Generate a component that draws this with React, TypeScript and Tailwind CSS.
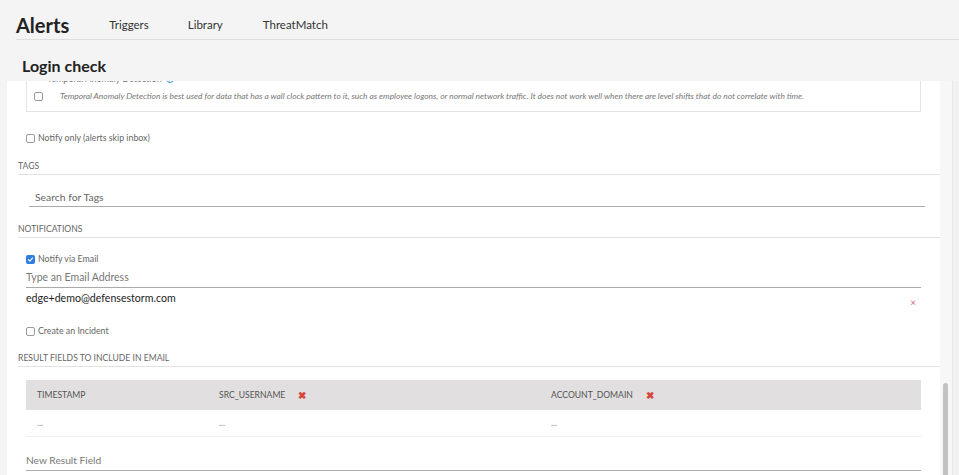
import React from 'react';

const font = { fontFamily: 'Lato, "Open Sans", Arial, sans-serif' };

function Box({ checked }: { checked?: boolean }) {
  if (checked) {
    return (
      <span className="inline-flex h-[9px] w-[9px] shrink-0 items-center justify-center rounded-[2px] bg-[#2f7de1]">
        <svg viewBox="0 0 10 10" className="h-[7px] w-[7px]">
          <path d="M2 5.2 L4.2 7.3 L8 2.8" fill="none" stroke="white" strokeWidth="1.6" strokeLinecap="round" strokeLinejoin="round" />
        </svg>
      </span>
    );
  }
  return <span className="inline-block h-[9px] w-[9px] shrink-0 rounded-[2px] border border-[#9a9a9a] bg-white" />;
}

function CheckRow({ label, checked, className }: { label: string; checked?: boolean; className: string }) {
  return (
    <div className={`ml-[19px] flex h-[14px] items-center gap-[3px] text-[8.8px] text-[#666] ${className}`}>
      <Box checked={checked} />
      <span>{label}</span>
    </div>
  );
}

function SectionHead({ title, className }: { title: string; className: string }) {
  return (
    <div className={`ml-[11px] flex h-[17px] items-center border-b border-[#e2e2e2] text-[8.6px] uppercase text-[#666] ${className}`}>
      {title}
    </div>
  );
}

function RedX() {
  return <span className="ml-[13px] text-[10px] font-bold leading-none text-[#d9453d]">✖</span>;
}

export default function App() {
  return (
    <div className="flex h-[475px] w-[959px] flex-col overflow-hidden bg-[#f4f4f4]" style={font}>
      <header className="ml-[16px] flex h-[40px] items-center border-b border-[#dedede] pt-[11px]">
        <h1 className="text-[20px] font-bold leading-none text-[#222]">Alerts</h1>
        <nav className="ml-[40px] flex text-[11.5px] text-[#333]">
          <span>Triggers</span>
          <span className="ml-[39px]">Library</span>
          <span className="ml-[40px]">ThreatMatch</span>
        </nav>
      </header>
      <div className="flex h-[41px] items-center pl-[22px] pt-[11px]">
        <h2 className="text-[16px] font-bold leading-none text-[#222]">Login check</h2>
      </div>

      <div className="flex flex-1 overflow-hidden">
        <div className="ml-[7px] w-[933px] overflow-hidden bg-white">
          <div className="-mt-[16px]">
            {/* anomaly detection option, scrolled mostly out of view */}
            <div className="ml-[19px] w-[895px] border border-[#e3e3e3] px-[7px] pb-[8px] pt-[7px]">
              <div className="ml-[13px] flex h-[12px] items-center gap-[4px] text-[9px] text-[#777]">
                <span>Temporal Anomaly Detection</span>
                <span className="inline-flex h-[8px] w-[8px] items-center justify-center rounded-full border border-[#3b97d3] text-[6px] font-bold text-[#3b97d3]">?</span>
              </div>
              <div className="mt-[4px] flex h-[14px] items-center">
                <Box />
                <span className="ml-[17px] whitespace-nowrap text-[8.4px] italic text-[#777]">
                  Temporal Anomaly Detection is best used for data that has a wall clock pattern to it, such as employee logons, or normal network traffic. It does not work well when there are level shifts that do not correlate with time.
                </span>
              </div>
            </div>

            <CheckRow label="Notify only (alerts skip inbox)" className="mt-[19px]" />

            <SectionHead title="Tags" className="mt-[13px]" />

            <div className="ml-[22px] mt-[14px] flex h-[18px] w-[896px] items-center border-b border-[#aaa] pl-[6px] text-[10.4px] text-[#666]">
              Search for Tags
            </div>

            <SectionHead title="Notifications" className="mt-[14px]" />

            <CheckRow label="Notify via Email" checked className="mt-[14px]" />

            <div className="ml-[19px] mt-[3px] flex h-[19px] w-[895px] items-center border-b border-[#aaa] text-[10.5px] text-[#777]">
              Type an Email Address
            </div>

            <div className="ml-[19px] mt-[4px] flex h-[14px] w-[895px] items-center justify-between pr-[5px]">
              <span className="text-[10.6px] text-[#222]">edge+demo@defensestorm.com</span>
              <span className="mt-[6px] text-[10px] leading-none text-[#d06b6b]">×</span>
            </div>

            <CheckRow label="Create an Incident" className="mt-[18px]" />

            <SectionHead title="Result fields to include in email" className="mt-[12px]" />

            <div className="ml-[19px] mt-[13px] w-[895px] text-[8.6px] text-[#555]">
              <div className="grid h-[30px] grid-cols-[182px_332px_1fr] items-center bg-[#e1dfdf] pl-[11px]">
                <span>TIMESTAMP</span>
                <span className="flex items-center">SRC_USERNAME<RedX /></span>
                <span className="flex items-center">ACCOUNT_DOMAIN<RedX /></span>
              </div>
              <div className="grid h-[27px] grid-cols-[182px_332px_1fr] items-center border-b border-[#eee] pl-[11px] text-[#888]">
                <span>...</span>
                <span>...</span>
                <span>...</span>
              </div>
            </div>

            <div className="ml-[19px] mt-[14px] flex h-[20px] w-[895px] items-center border-b border-[#aaa] text-[10.2px] text-[#777]">
              New Result Field
            </div>
          </div>
        </div>

        <div className="flex w-[19px]">
          <div className="w-[12px] bg-[#f7f7f7] pl-[3px]">
            <div className="mt-[302px] h-[120px] w-[5px] rounded-full bg-[#c2c2c2]" />
          </div>
          <div className="flex-1 border-l border-[#e8e8e8] bg-[#f1f1f1]" />
        </div>
      </div>
    </div>
  );
}
